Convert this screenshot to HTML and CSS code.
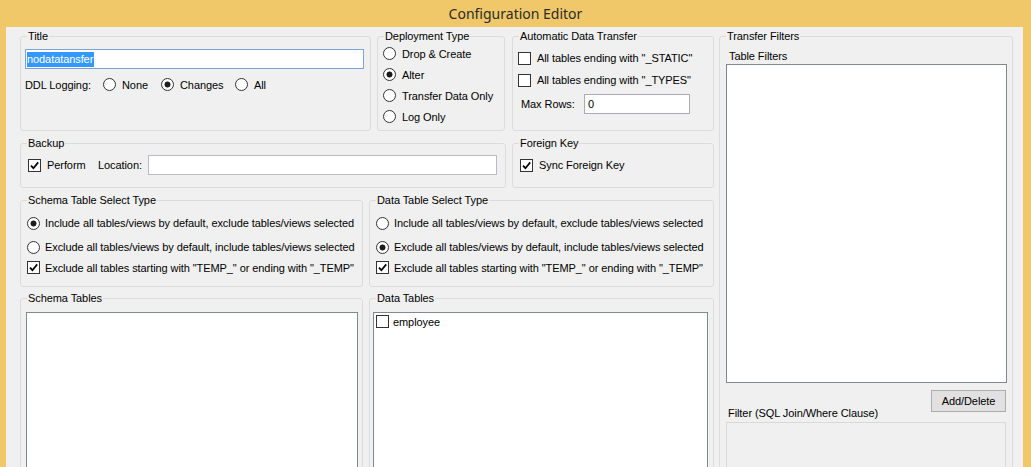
FILE: index.html
```html
<!DOCTYPE html>
<html>
<head>
<meta charset="utf-8">
<title>Configuration Editor</title>
<link rel="stylesheet" href="styles.css">
</head>
<body>
<div class="window">
  <div class="titlebar">Configuration Editor</div>
  <div class="client">
    <div class="left">
      <div class="row r1">
        <fieldset class="g g-title">
          <legend>Title</legend>
          <div class="tb tb-title"><span class="sel">nodatatansfer</span></div>
          <div class="ddl">
            <span class="ddl-label">DDL Logging:</span>
            <span class="opt opt-none"><span class="radio"></span>None</span>
            <span class="opt opt-changes"><span class="radio on"></span>Changes</span>
            <span class="opt"><span class="radio"></span>All</span>
          </div>
        </fieldset>
        <fieldset class="g g-deploy">
          <legend>Deployment Type</legend>
          <div class="opt h21"><span class="radio"></span>Drop &amp; Create</div>
          <div class="opt h21"><span class="radio on"></span>Alter</div>
          <div class="opt h21"><span class="radio"></span>Transfer Data Only</div>
          <div class="opt h21"><span class="radio"></span>Log Only</div>
        </fieldset>
        <fieldset class="g g-auto">
          <legend>Automatic Data Transfer</legend>
          <div class="opt h22"><span class="check"></span>All tables ending with "_STATIC"</div>
          <div class="opt h22"><span class="check"></span>All tables ending with "_TYPES"</div>
          <div class="maxrows"><span class="mr-label">Max Rows:</span><div class="tb tb-max">0</div></div>
        </fieldset>
      </div>

      <div class="row r2">
        <fieldset class="g g-backup">
          <legend>Backup</legend>
          <div class="backup-row">
            <span class="opt opt-perform"><span class="check on"><svg viewBox="0 0 11 11"><path d="M2 5.6 L4.4 8.2 L9.2 2.4"/></svg></span>Perform</span>
            <span class="loc-label">Location:</span>
            <div class="tb tb-loc"></div>
          </div>
        </fieldset>
        <fieldset class="g g-fk">
          <legend>Foreign Key</legend>
          <div class="opt h20"><span class="check on"><svg viewBox="0 0 11 11"><path d="M2 5.6 L4.4 8.2 L9.2 2.4"/></svg></span>Sync Foreign Key</div>
        </fieldset>
      </div>

      <div class="row r3">
        <fieldset class="g g-sel g-schema-sel">
          <legend>Schema Table Select Type</legend>
          <div class="opt h24"><span class="radio on"></span>Include all tables/views by default, exclude tables/views selected</div>
          <div class="opt h24"><span class="radio"></span>Exclude all tables/views by default, include tables/views selected</div>
          <div class="opt h17"><span class="check on"><svg viewBox="0 0 11 11"><path d="M2 5.6 L4.4 8.2 L9.2 2.4"/></svg></span>Exclude all tables starting with "TEMP_" or ending with "_TEMP"</div>
        </fieldset>
        <fieldset class="g g-sel g-data-sel">
          <legend>Data Table Select Type</legend>
          <div class="opt h24"><span class="radio"></span>Include all tables/views by default, exclude tables/views selected</div>
          <div class="opt h24"><span class="radio on"></span>Exclude all tables/views by default, include tables/views selected</div>
          <div class="opt h17"><span class="check on"><svg viewBox="0 0 11 11"><path d="M2 5.6 L4.4 8.2 L9.2 2.4"/></svg></span>Exclude all tables starting with "TEMP_" or ending with "_TEMP"</div>
        </fieldset>
      </div>

      <div class="row r4">
        <fieldset class="g g-tables g-schema-tables">
          <legend>Schema Tables</legend>
          <div class="listbox lb-schema"></div>
        </fieldset>
        <fieldset class="g g-tables g-data-tables">
          <legend>Data Tables</legend>
          <div class="listbox lb-data">
            <div class="opt item"><span class="check"></span>employee</div>
          </div>
        </fieldset>
      </div>
    </div>

    <div class="right">
      <fieldset class="g g-filters">
        <legend>Transfer Filters</legend>
        <div class="lbl lbl-tf">Table Filters</div>
        <div class="listbox lb-filters"></div>
        <div class="btn-row">
          <span class="lbl lbl-filter">Filter (SQL Join/Where Clause)</span>
          <button class="btn">Add/Delete</button>
        </div>
        <div class="filter-box"></div>
      </fieldset>
    </div>
  </div>
</div>
</body>
</html>
```
FILE: styles.css
```css
* { box-sizing: border-box; }

body {
  margin: 0;
  font-family: "Liberation Sans", Arial, sans-serif;
  font-size: 11px;
  letter-spacing: -0.08px;
  color: #000;
}

.window {
  width: 1031px;
  height: 467px;
  background: #f0c869;
  overflow: hidden;
  display: flex;
  flex-direction: column;
}

.titlebar {
  height: 27px;
  flex: none;
  display: flex;
  align-items: center;
  justify-content: center;
  font-family: "Noto Sans", "Open Sans", sans-serif;
  font-size: 14px;
  letter-spacing: 0;
  color: #2b2b2b;
}

.client {
  flex: 1;
  margin: 0 8px 0 6px;
  background: #f0f0f0;
  display: flex;
  gap: 5px;
  padding: 3px 0 0 14px;
  overflow: hidden;
}

.left {
  width: 694px;
  flex: none;
  display: flex;
  flex-direction: column;
}

.row { display: flex; flex: none; }
.r1 { height: 101px; }
.r2 { height: 51px; margin-top: 6px; }
.r3 { height: 93px; margin-top: 6px; }
.r4 { height: 220px; margin-top: 5px; }

/* group boxes */
.g {
  --pl: 0px;
  --pt: 0px;
  margin: 0;
  padding: var(--pt) 0 0 var(--pl);
  min-width: 0;
  border: 1px solid #dcdcdc;
  border-radius: 3px;
  flex: none;
}
.g legend {
  padding: 0 1px;
  margin-left: calc(6px - var(--pl));
  line-height: 13px;
  height: 13px;
}

.g-title { width: 351px; --pt: 6px; --pl: 4px; }
.g-deploy { width: 128px; margin-left: 6px; --pl: 5px; }
.g-auto { width: 202px; margin-left: 7px; --pt: 4px; --pl: 5px; }

.g-backup { width: 486px; --pt: 5px; --pl: 7px; }
.g-fk { width: 202px; margin-left: 6px; --pt: 5px; --pl: 7px; }

.g-schema-sel { width: 343px; --pt: 4px; --pl: 6px; }
.g-data-sel { width: 345px; margin-left: 6px; --pt: 4px; --pl: 6px; }

.g-schema-tables { width: 343px; --pt: 7px; --pl: 5px; }
.g-data-tables { width: 345px; margin-left: 6px; --pt: 7px; --pl: 3px; }

/* options */
.opt {
  display: flex;
  align-items: center;
  gap: 6px;
  white-space: nowrap;
}
.h17 { height: 17px; }
.h20 { height: 20px; }
.h21 { height: 21px; }
.h22 { height: 22px; }
.h24 { height: 24px; }
.g-sel .opt { gap: 5px; }

.radio {
  flex: none;
  width: 13px;
  height: 13px;
  border: 1px solid #333;
  border-radius: 50%;
  background: #fff;
}
.radio.on {
  background: radial-gradient(circle at center, #1c1c1c 0 2.7px, #fff 3.3px);
}

.check {
  flex: none;
  width: 13px;
  height: 13px;
  border: 1px solid #333;
  background: #fff;
  display: flex;
}
.check svg { width: 11px; height: 11px; }
.check path { fill: none; stroke: #000; stroke-width: 1.7; }

/* text boxes */
.tb {
  height: 20px;
  border: 1px solid #abadb3;
  background: #fff;
  display: flex;
  align-items: center;
  padding-left: 3px;
}
.tb-title {
  width: 339px;
  border-color: #7aa3d8;
  padding-left: 1px;
}
.sel {
  background: #3399ff;
  color: #fff;
  line-height: 15px;
  padding-right: 1px;
}

.ddl {
  display: flex;
  align-items: center;
  height: 13px;
  margin-top: 9px;
}
.ddl-label { width: 78px; flex: none; }
.opt-none { width: 58px; flex: none; }
.opt-changes { width: 74px; flex: none; }

.maxrows {
  display: flex;
  align-items: center;
  margin-top: 3px;
  padding-left: 3px;
}
.mr-label { width: 63px; flex: none; }
.tb-max { width: 106px; }

.backup-row {
  display: flex;
  align-items: center;
  height: 20px;
}
.opt-perform { width: 70px; flex: none; }
.loc-label { width: 50px; flex: none; }
.tb-loc { width: 349px; border-color: #b9bcc2; }

/* list boxes */
.listbox {
  background: #fff;
  border: 1px solid #828790;
}
.lb-schema { width: 332px; height: 200px; }
.lb-data { width: 335px; height: 200px; padding: 2px 0 0 2px; }
.item { height: 13px; gap: 4px; }

/* right column */
.right { width: 294px; flex: none; }
.g-filters { width: 294px; height: 460px; --pt: 7px; --pl: 6px; }
.lbl { line-height: 13px; }
.lbl-tf { margin-left: 3px; height: 13px; }
.lb-filters { width: 281px; height: 319px; margin-top: 1px; }

.btn-row {
  width: 281px;
  height: 30px;
  margin-top: 7px;
  display: flex;
  justify-content: space-between;
  align-items: flex-end;
}
.lbl-filter { margin-left: 2px; }
.btn {
  align-self: flex-start;
  width: 75px;
  height: 22px;
  margin: 0 1px 0 0;
  padding: 0;
  border: 1px solid #adadad;
  background: #e1e1e1;
  font: inherit;
  letter-spacing: inherit;
  color: #000;
}
.filter-box {
  width: 280px;
  height: 100px;
  margin-top: 2px;
  background: #f0f0f0;
  border: 1px solid #d9d9d9;
}
```
